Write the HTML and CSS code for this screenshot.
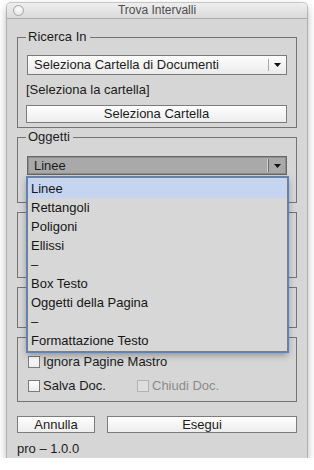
FILE: index.html
```
<!DOCTYPE html>
<html>
<head>
    <title>Trova Intervalli</title>
    <link rel="stylesheet" href="styles.css">
</head>
<body>
    <div class="window">
        <div class="titlebar">
            <span class="close-btn"></span>
            <span class="title">Trova Intervalli</span>
        </div>
        <div class="content">
            <fieldset class="group group-search">
                <legend>Ricerca In</legend>
                <div class="select">
                    <span class="select-value">Seleziona Cartella di Documenti</span>
                    <span class="select-arrow">
                        <svg width="7" height="4" viewBox="0 0 7 4"><path d="M0 0h7L3.5 4z" fill="#111"/></svg>
                    </span>
                </div>
                <div class="path-label">[Seleziona la cartella]</div>
                <button class="btn btn-folder">Seleziona Cartella</button>
            </fieldset>

            <fieldset class="group group-objects">
                <legend>Oggetti</legend>
                <div class="select-wrap">
                    <div class="select is-open">
                        <span class="select-value">Linee</span>
                        <span class="select-arrow">
                            <svg width="7" height="4" viewBox="0 0 7 4"><path d="M0 0h7L3.5 4z" fill="#111"/></svg>
                        </span>
                    </div>
                    <ul class="menu">
                        <li class="is-active">Linee</li>
                        <li>Rettangoli</li>
                        <li>Poligoni</li>
                        <li>Ellissi</li>
                        <li>–</li>
                        <li>Box Testo</li>
                        <li>Oggetti della Pagina</li>
                        <li>–</li>
                        <li>Formattazione Testo</li>
                    </ul>
                </div>
            </fieldset>

            <fieldset class="group group-text">
                <legend>&nbsp;</legend>
            </fieldset>

            <fieldset class="group group-page">
                <legend>&nbsp;</legend>
            </fieldset>

            <fieldset class="group group-save">
                <legend>&nbsp;</legend>
                <div class="check-row">
                    <label class="check"><span class="check-box"></span>Ignora Pagine Mastro</label>
                </div>
                <div class="check-row">
                    <label class="check check-first"><span class="check-box"></span>Salva Doc.</label>
                    <label class="check is-disabled"><span class="check-box"></span>Chiudi Doc.</label>
                </div>
            </fieldset>

            <div class="actions">
                <button class="btn btn-cancel">Annulla</button>
                <button class="btn btn-run">Esegui</button>
            </div>

            <div class="version">pro – 1.0.0</div>
        </div>
    </div>
</body>
</html>
```

FILE: styles.css
```
* {
    box-sizing: border-box;
}

body {
    margin: 0;
    background: #fff;
    font-family: "Liberation Sans", Arial, sans-serif;
    font-size: 13px;
    color: #1b1b1b;
}

.window {
    width: 300px;
    margin: 3px 0 0 7px;
    background: #d6d6d6;
    border-radius: 4px 4px 0 0;
    box-shadow: 0 0 0 1px rgba(0, 0, 0, 0.18), 0 4px 9px rgba(0, 0, 0, 0.35);
}

.titlebar {
    height: 16px;
    display: grid;
    grid-template-columns: 1fr auto 1fr;
    align-items: center;
    background: linear-gradient(#eeeeee, #dadada);
    border-bottom: 1px solid #acacac;
    border-radius: 4px 4px 0 0;
}

.close-btn {
    width: 11px;
    height: 11px;
    margin-left: 6px;
    border-radius: 50%;
    border: 1px solid #a5a5a5;
    background: radial-gradient(circle at 50% 35%, #fdfdfd, #dedede);
}

.title {
    font-size: 12px;
    line-height: 15px;
    color: #4d4d4d;
}

.content {
    padding: 10px 10px 1px;
    display: flex;
    flex-direction: column;
    gap: 1px;
}

/* group boxes */
.group {
    margin: 0;
    min-width: 0;
    border: 1px solid #737373;
    padding: 0 9px 0 8px;
}

.group legend {
    padding: 0 3px 0 2px;
    line-height: 16px;
}

.group-search {
    padding-top: 10px;
    padding-bottom: 4px;
}

.group-objects {
    padding-top: 11px;
    padding-bottom: 27px;
}

.group-text {
    padding-bottom: 57px;
}

.group-page {
    padding-bottom: 32px;
}

.group-save {
    padding: 9px 9px 7px 10px;
    display: flex;
    flex-direction: column;
    gap: 8px;
}

/* dropdowns */
.select {
    display: flex;
    height: 20px;
    margin-left: 1px;
    border: 1px solid #7a7a7a;
    background: linear-gradient(#fdfdfd, #ebebeb);
}

.select-value {
    flex: 1;
    padding-left: 6px;
    line-height: 18px;
}

.select-arrow {
    width: 18px;
    margin: 3px 0;
    border-left: 1px solid #a9a9a9;
    display: flex;
    align-items: center;
    justify-content: center;
}

.select-wrap {
    position: relative;
    margin-left: 1px;
}

.select-wrap .select {
    margin-left: 0;
}

.select.is-open {
    height: 19px;
    background: #a9a9a9;
    border-color: #676767;
    box-shadow: inset 0 0 0 1px #8d8d8d;
}

.select.is-open .select-value {
    line-height: 17px;
}

.select.is-open .select-arrow {
    margin: 2px 0;
    border-left-color: #6e6e6e;
    box-shadow: -1px 0 0 #d2d2d2;
}

.menu {
    position: absolute;
    top: 21px;
    left: 0;
    right: -1px;
    z-index: 10;
    margin: 0;
    padding: 1px 0;
    list-style: none;
    background: #d7d7d7;
    border: 1px solid #7e7e7e;
    outline: 1px solid #4b86d7;
    box-shadow: 0 3px 7px rgba(0, 0, 0, 0.35);
}

.menu li {
    padding-left: 3px;
    line-height: 19px;
    color: #151515;
}

.menu li.is-active {
    background: #c5d4f1;
}

.path-label {
    margin-top: 7px;
    line-height: 16px;
}

/* buttons */
.btn {
    height: 17px;
    padding: 0;
    border: 1px solid #7c7c7c;
    border-radius: 0;
    background: linear-gradient(#fefefe, #ededed);
    font: inherit;
    line-height: 15px;
    color: #1b1b1b;
}

.btn-folder {
    display: block;
    width: 100%;
    height: 18px;
    margin-top: 7px;
    line-height: 16px;
}

.actions {
    display: flex;
    gap: 12px;
    margin-top: 13px;
}

.btn-cancel {
    width: 78px;
}

.btn-run {
    flex: 1;
}

/* checkboxes */
.check-row {
    display: flex;
    align-items: center;
    height: 16px;
}

.check {
    display: flex;
    align-items: center;
    gap: 3px;
    line-height: 16px;
}

.check-first {
    width: 109px;
}

.check-box {
    width: 12px;
    height: 12px;
    border: 1px solid #7b7b7b;
    background: linear-gradient(#ffffff, #ececec);
}

.check.is-disabled {
    color: #8c8c8c;
}

.check.is-disabled .check-box {
    border-color: #b2b2b2;
    background: #dedede;
}

.version {
    margin-top: 7px;
    line-height: 16px;
}
```
